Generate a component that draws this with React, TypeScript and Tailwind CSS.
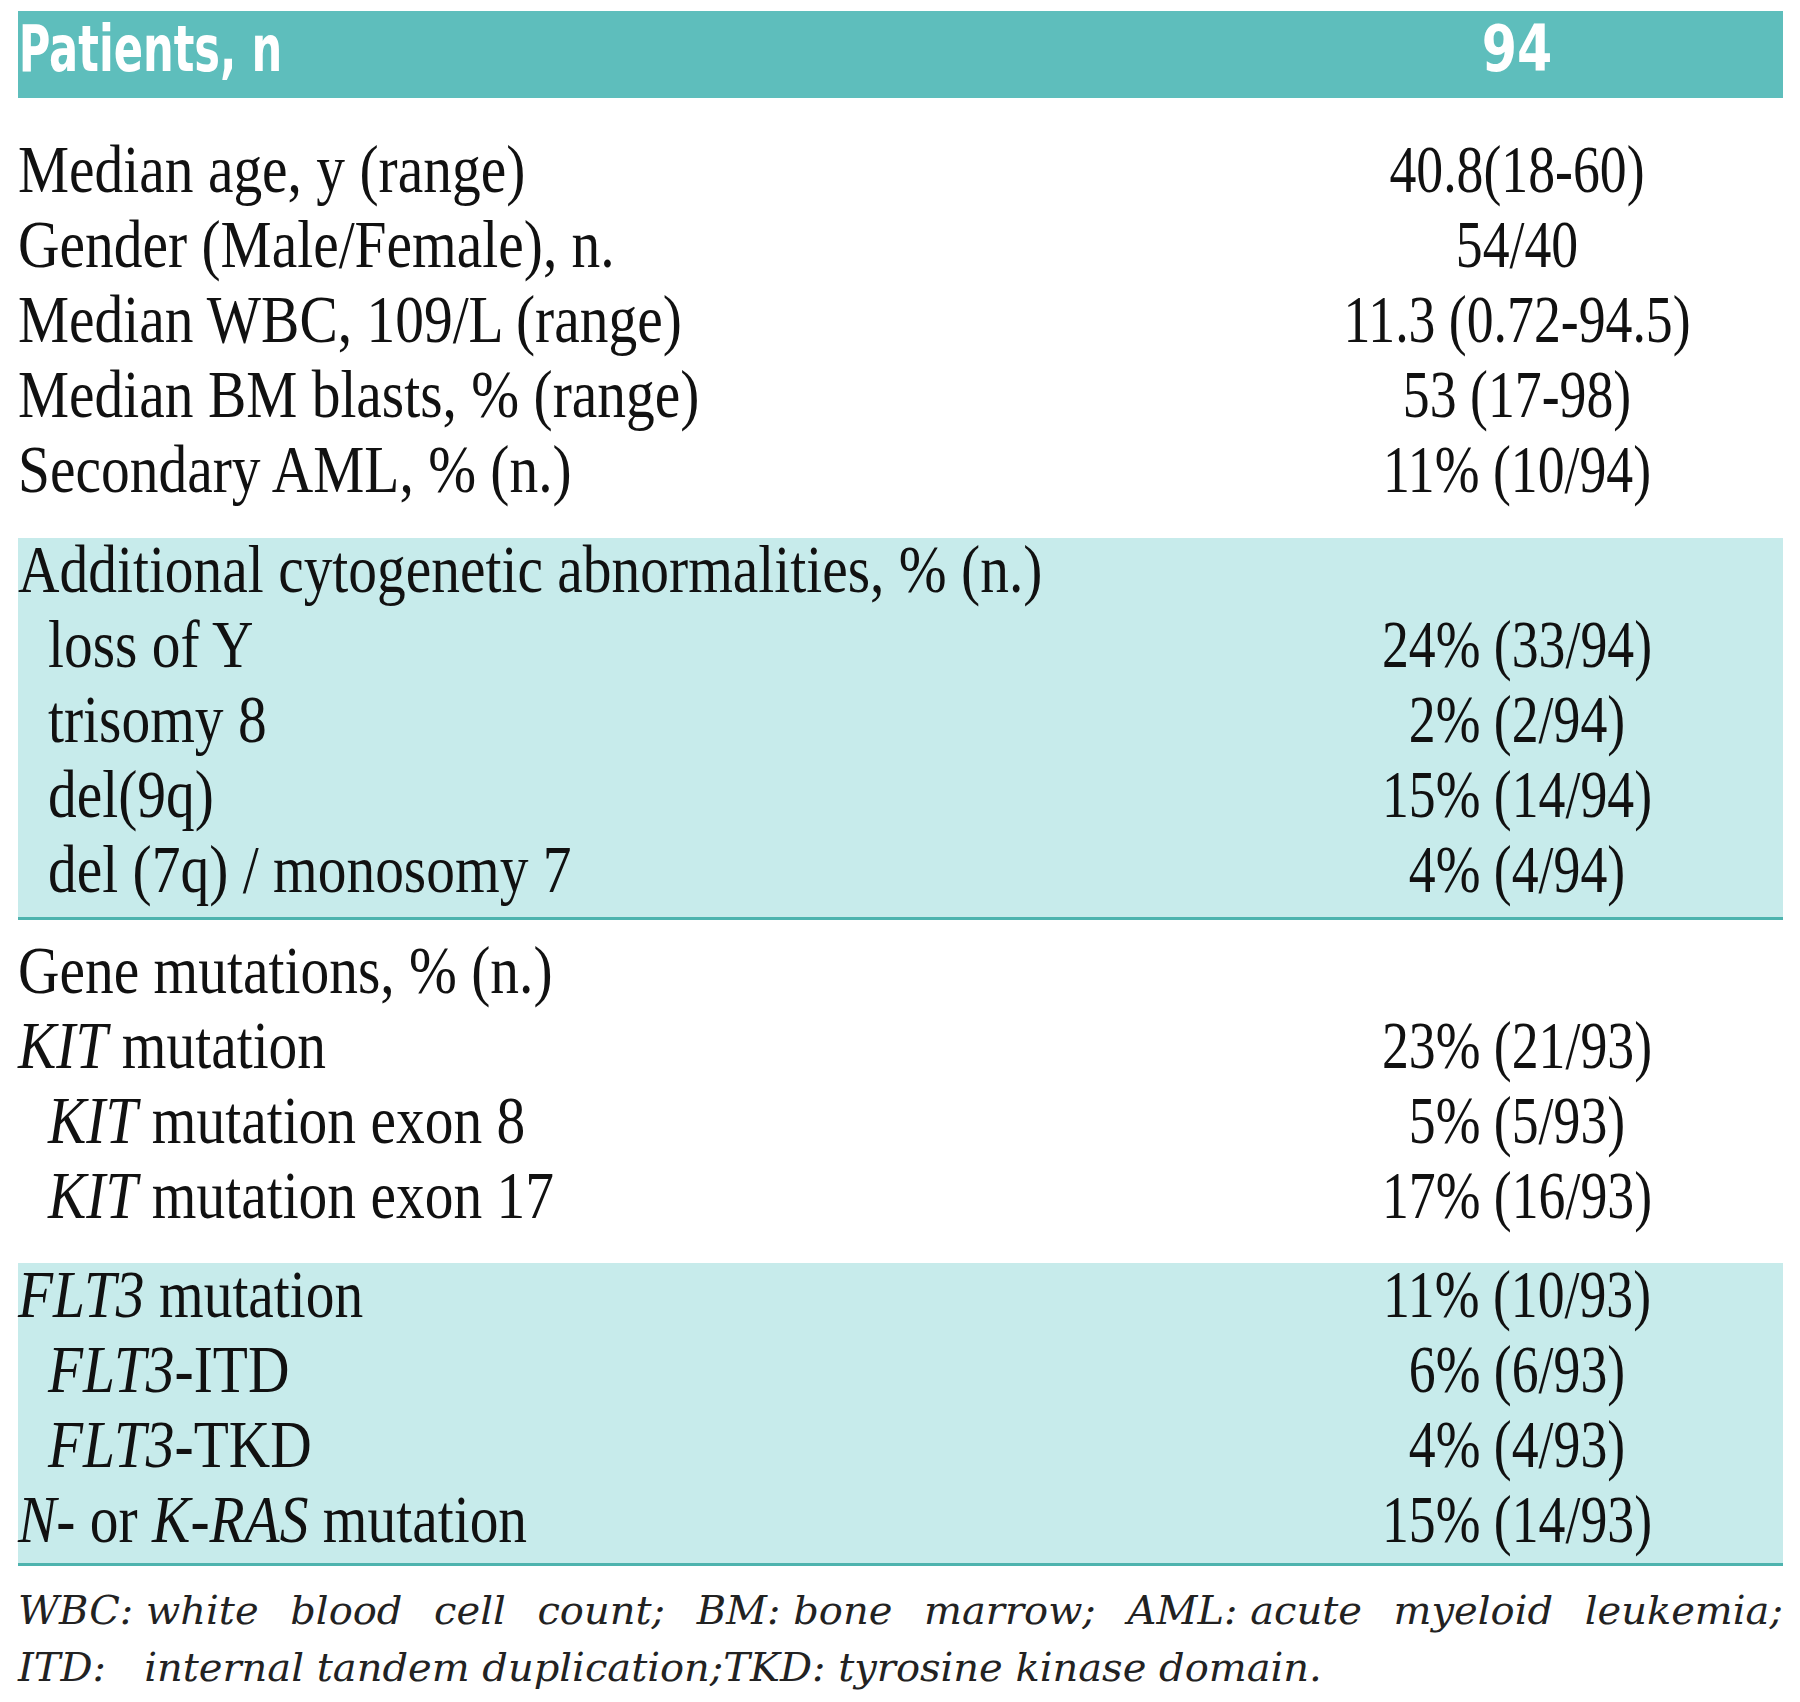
const serif = "font-['Liberation_Serif','Times_New_Roman',serif]";

type Row = { label: React.ReactNode; value?: string; indent?: boolean };

function Label({ children, indent }: { children: React.ReactNode; indent?: boolean }) {
  return (
    <div className={indent ? "pl-[30px]" : ""}>
      <div className="whitespace-nowrap origin-left scale-x-[0.845]">{children}</div>
    </div>
  );
}

function DataRow({ row }: { row: Row }) {
  return (
    <div className="grid h-[75px] grid-cols-[1fr_532px] items-center leading-[75px]">
      <Label indent={row.indent}>{row.label}</Label>
      <div className="whitespace-nowrap text-center origin-center scale-x-[0.79]">{row.value}</div>
    </div>
  );
}

function Section({ rows, shaded, className }: { rows: Row[]; shaded?: boolean; className?: string }) {
  return (
    <div className={(shaded ? "flex flex-col bg-[#c7ebeb] border-b-[3px] border-[#4db3ae] " : "") + (className ?? "")}>
      <div className={shaded ? "-mt-[6px]" : ""}>
        {rows.map((r, i) => (
          <DataRow key={i} row={r} />
        ))}
      </div>
    </div>
  );
}

const general: Row[] = [
  { label: "Median age, y (range)", value: "40.8(18-60)" },
  { label: "Gender (Male/Female), n.", value: "54/40" },
  { label: "Median WBC, 109/L (range)", value: "11.3 (0.72-94.5)" },
  { label: "Median BM blasts, % (range)", value: "53 (17-98)" },
  { label: "Secondary AML, % (n.)", value: "11% (10/94)" },
];

const cyto: Row[] = [
  { label: "Additional cytogenetic abnormalities, % (n.)" },
  { label: "loss of Y", value: "24% (33/94)", indent: true },
  { label: "trisomy 8", value: "2% (2/94)", indent: true },
  { label: "del(9q)", value: "15% (14/94)", indent: true },
  { label: "del (7q) / monosomy 7", value: "4% (4/94)", indent: true },
];

const kit: Row[] = [
  { label: "Gene mutations, % (n.)" },
  { label: <><i>KIT</i> mutation</>, value: "23% (21/93)" },
  { label: <><i>KIT</i> mutation exon 8</>, value: "5% (5/93)", indent: true },
  { label: <><i>KIT</i> mutation exon 17</>, value: "17% (16/93)", indent: true },
];

const flt: Row[] = [
  { label: <><i>FLT3</i> mutation</>, value: "11% (10/93)" },
  { label: <><i>FLT3</i>-ITD</>, value: "6% (6/93)", indent: true },
  { label: <><i>FLT3</i>-TKD</>, value: "4% (4/93)", indent: true },
  { label: <><i>N</i>- or <i>K-RAS</i> mutation</>, value: "15% (14/93)" },
];

export default function App() {
  return (
    <div className="min-h-[1702px] bg-white pt-[11px]">
      <div className={`ml-[18px] w-[1765px] text-[68px] text-[#111] ${serif}`}>
        {/* header bar */}
        <div className="grid h-[87px] grid-cols-[1fr_532px] items-center bg-[#5ebebc] pb-[12px] font-['DejaVu_Sans_Condensed','DejaVu_Sans',sans-serif] text-[64px] font-bold leading-none text-white">
          <div className="whitespace-nowrap origin-left scale-x-[0.75] pl-[1px]">Patients, n</div>
          <div className="text-center origin-center scale-x-[0.88]">94</div>
        </div>

        <Section rows={general} className="mt-[34px]" />
        <Section rows={cyto} shaded className="mt-[31px] pb-[10px]" />
        <Section rows={kit} className="mt-[13px]" />
        <Section rows={flt} shaded className="mt-[30px] pb-[6px]" />

        <div className="mt-[16px] font-['DejaVu_Serif',serif] text-[40px] italic leading-[57px] text-[#222]">
          <div className="flex justify-between whitespace-nowrap">
            <span>WBC: white</span>
            <span>blood</span>
            <span>cell</span>
            <span>count;</span>
            <span>BM: bone</span>
            <span>marrow;</span>
            <span>AML: acute</span>
            <span>myeloid</span>
            <span>leukemia;</span>
          </div>
          <div className="whitespace-pre">ITD:   internal tandem duplication;TKD: tyrosine kinase domain.</div>
        </div>
      </div>
    </div>
  );
}
